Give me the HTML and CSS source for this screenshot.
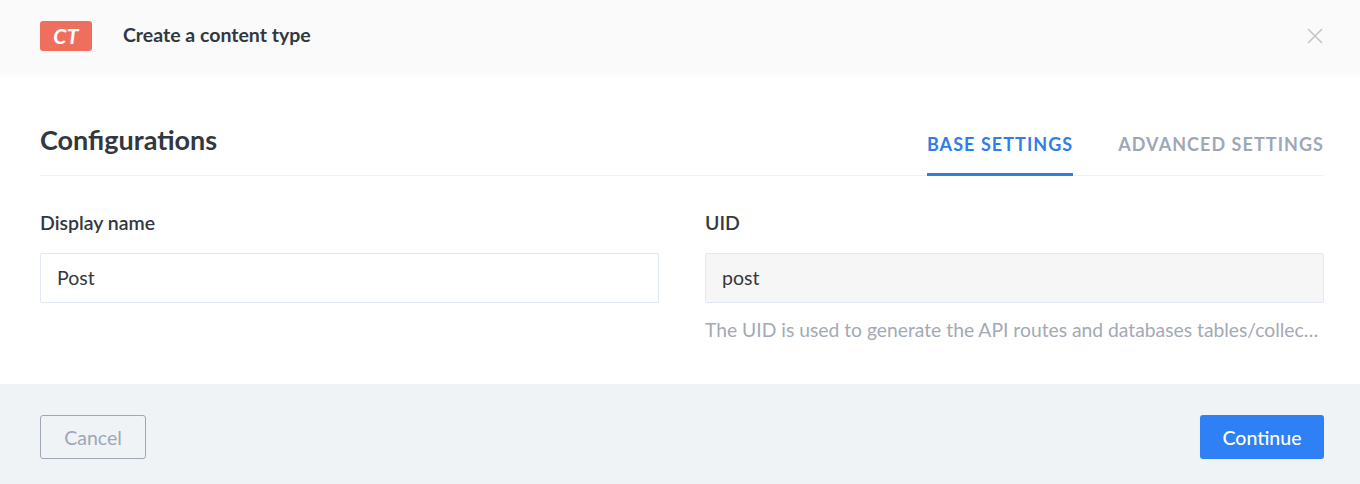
FILE: index.html
```html
<!DOCTYPE html>
<html>
<head>
<meta charset="utf-8">
<link rel="stylesheet" href="styles.css">
</head>
<body>
<div class="modal">
  <header class="modal-header">
    <span class="badge">CT</span>
    <h1 class="modal-title">Create a content type</h1>
    <button class="close" aria-label="Close">
      <svg width="16" height="16" viewBox="0 0 16 16"><path d="M1 1L15 15M15 1L1 15" stroke="#c3c5c9" stroke-width="1.6" fill="none"/></svg>
    </button>
  </header>
  <section class="modal-body">
    <div class="section-head">
      <h2 class="section-title">Configurations</h2>
      <nav class="tabs">
        <span class="tab active">Base settings</span>
        <span class="tab">Advanced settings</span>
      </nav>
    </div>
    <div class="fields">
      <div class="field">
        <label class="label">Display name</label>
        <div class="input">Post</div>
      </div>
      <div class="field">
        <label class="label">UID</label>
        <div class="input disabled">post</div>
        <p class="hint">The UID is used to generate the API routes and databases tables/collections</p>
      </div>
    </div>
  </section>
  <footer class="modal-footer">
    <button class="btn btn-cancel">Cancel</button>
    <button class="btn btn-primary">Continue</button>
  </footer>
</div>
</body>
</html>
```
FILE: styles.css
```css
* { box-sizing: border-box; }
html, body { margin: 0; padding: 0; }
body {
  width: 1360px;
  height: 484px;
  overflow: hidden;
  background: #ffffff;
  font-family: Lato, "Noto Sans", sans-serif;
  color: #333740;
}
.modal { display: flex; flex-direction: column; height: 484px; }
.modal-header {
  height: 78px;
  display: flex;
  align-items: flex-start;
  padding: 21px 37px 0 40px;
  background: linear-gradient(to bottom, #fafafa 0, #fafafa 70px, #fdfdfd 78px);
}
.badge {
  width: 52px;
  height: 30px;
  border-radius: 3px;
  background: #ef6f5f;
  color: #fff;
  font-weight: 700;
  font-style: italic;
  font-size: 21px;
  line-height: 30px;
  text-align: center;
  letter-spacing: 0.5px;
}
.modal-title {
  margin: 0 0 0 31px;
  font-size: 19.5px;
  font-weight: 700;
  line-height: 28px;
  color: #333740;
  flex: 1;
}
.close {
  border: 0;
  background: none;
  padding: 0;
  margin-top: 7px;
  width: 16px;
  height: 16px;
  display: block;
}
.close svg { display: block; }
.modal-body {
  flex: 1;
  padding: 46px 36px 0 40px;
  background: #fff;
}
.section-head {
  display: flex;
  justify-content: space-between;
  align-items: flex-end;
  border-bottom: 1px solid #f0f1f3;
}
.section-title {
  margin: 0 0 19px;
  font-size: 27px;
  line-height: 32px;
  font-weight: 700;
  color: #333740;
}
.tabs { display: flex; gap: 45px; }
.tab {
  text-transform: uppercase;
  font-size: 18px;
  font-weight: 700;
  letter-spacing: 1.05px;
  line-height: 20px;
  color: #9ea7b8;
  padding-bottom: 19px;
  border-bottom: 3px solid transparent;
  margin-bottom: -1px;
}
.tab.active { color: #2f7de7; border-bottom-color: #2f7de7; }
.fields {
  display: grid;
  grid-template-columns: 1fr 1fr;
  gap: 46px;
  padding-top: 35px;
}
.field { min-width: 0; }
.label {
  display: block;
  font-size: 19.5px;
  font-weight: 600;
  line-height: 24px;
  color: #333740;
  margin-bottom: 18px;
}
.input {
  height: 50px;
  border: 1px solid #e3e9f3;
  border-radius: 2px;
  padding: 0 16px;
  font-size: 19.5px;
  line-height: 48px;
  color: #333740;
  background: #fff;
}
.input.disabled { background: #f6f6f7; }
.hint {
  margin: 15px 0 0;
  font-size: 19.3px;
  line-height: 24px;
  color: #a3a9b5;
  white-space: nowrap;
  overflow: hidden;
  text-overflow: ellipsis;
}
.modal-footer {
  height: 100px;
  background: #eff3f6;
  display: flex;
  justify-content: space-between;
  align-items: flex-start;
  padding: 31px 36px 0 40px;
}
.btn {
  height: 44px;
  border-radius: 3px;
  font-family: Lato, "Noto Sans", sans-serif;
  font-size: 19.5px;
  padding: 0;
  cursor: pointer;
}
.btn-cancel {
  width: 106px;
  border: 1px solid #9ea7b8;
  background: transparent;
  color: #9ea7b8;
}
.btn-primary {
  width: 124px;
  border: 0;
  background: #2f80f5;
  color: #fff;
  font-weight: 500;
}
```
